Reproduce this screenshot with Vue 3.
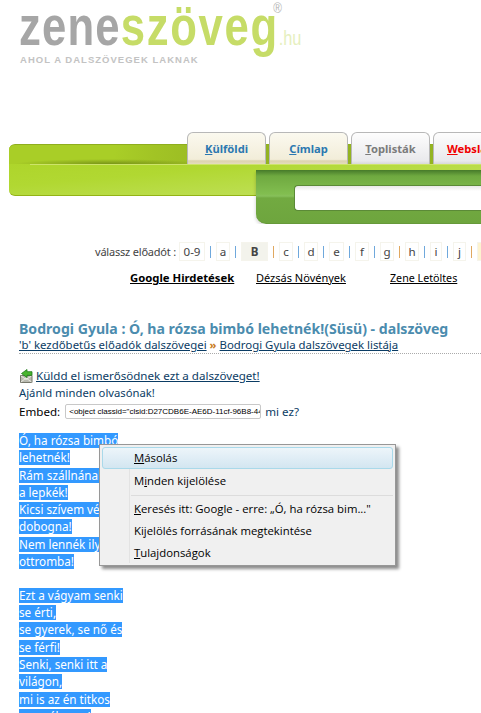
<script setup>
const letters = [
  { t: '0-9', w: 26 }, { t: 'a', w: 14 }, { t: 'B', w: 27, active: true }, { t: 'c', w: 14 },
  { t: 'd', w: 14 }, { t: 'e', w: 15 }, { t: 'f', w: 14 }, { t: 'g', w: 14 },
  { t: 'h', w: 14 }, { t: 'i', w: 12 }, { t: 'j', w: 13 }, { t: '', w: 12, last: true },
]
const orangeSeps = [2, 7, 10]
const lyrics = [
  ['Ó, ha rózsa bimbó', 'lehetnék!', 'Rám szállnának', 'a lepkék!', 'Kicsi szívem vél', 'dobogna!', 'Nem lennék ily', 'ottromba!'],
  ['Ezt a vágyam senki', 'se érti,', 'se gyerek, se nő és', 'se férfi!', 'Senki, senki itt a', 'világon,', 'mi is az én titkos', 'nagy álmom!'],
]
</script>

<template>
  <div class="page">
    <header class="logo">
      <div class="brand"><span class="zene">zene</span><span class="szoveg">szöveg</span><span class="hu">.hu</span><span class="reg">®</span></div>
      <div class="slogan">AHOL A DALSZÖVEGEK LAKNAK</div>
    </header>

    <section class="hero">
      <nav class="tabs">
        <a class="tab cream"><u>K</u>ülföldi</a>
        <a class="tab cream"><u>C</u>ímlap</a>
        <a class="tab grey"><u>T</u>oplisták</a>
        <a class="tab red"><u>W</u>ebslágerek</a>
      </nav>
      <div class="bar"></div>
      <div class="panel"><div class="search"></div></div>
    </section>

    <div class="abc">
      <span class="abc-label">válassz előadót :</span>
      <template v-for="(l, i) in letters" :key="i">
        <span class="box" :class="{ active: l.active, last: l.last }" :style="{ width: l.w + 'px' }">{{ l.t }}</span>
        <span v-if="!l.last" class="sep" :class="orangeSeps.includes(i) ? 'orange' : 'blue'"></span>
      </template>
    </div>

    <div class="ads">
      <a class="ad-title">Google Hirdetések</a>
      <a class="ad-one">Dézsás Növények</a>
      <a class="ad-two">Zene Letöltes</a>
    </div>

    <main class="content">
      <h1>Bodrogi Gyula : Ó, ha rózsa bimbó lehetnék!(Süsü) - dalszöveg</h1>
      <div class="crumbs"><a>'b' kezdőbetűs előadók dalszövegei</a> <b>»</b> <a>Bodrogi Gyula dalszövegek listája</a></div>

      <div class="send">
        <svg class="mail" viewBox="0 0 14 14" width="14" height="14">
          <path d="M1.5 6.5h11.500v7H1.500z" fill="#b9bab0" stroke="#77786c" />
          <path d="M2 13l5-4 5.500 4M2 7l5 3.500L12.500 7" fill="none" stroke="#eeeee6" stroke-width=".9" />
          <path d="M8 .5 2.500 4.500 8 8.500V6.300h5V2.700H8z" fill="#49b52f" stroke="#1f7a1a" stroke-width=".8" />
        </svg>
        <a>Küldd el ismerősödnek ezt a dalszöveget!</a>
      </div>
      <div class="recommend">Ajánld minden olvasónak!</div>
      <div class="embed">
        <span>Embed:</span>
        <div class="embed-box">&lt;object classid="clsid:D27CDB6E-AE6D-11cf-96B8-444553540000"</div>
        <a class="what">mi ez?</a>
      </div>

      <div class="lyrics">
        <p v-for="(stanza, s) in lyrics" :key="s">
          <template v-for="line in stanza" :key="line"><span>{{ line }}</span><br /></template>
        </p>
      </div>
    </main>

    <div class="menu">
      <div class="item hot"><u>M</u>ásolás</div>
      <div class="item">M<u>i</u>nden kijelölése</div>
      <div class="rule"></div>
      <div class="item"><u>K</u>eresés itt: Google - erre: „Ó, ha rózsa bim..."</div>
      <div class="item">Ki<u>j</u>elölés forrásának megtekintése</div>
      <div class="item"><u>T</u>ulajdonságok</div>
    </div>
  </div>
</template>

<style>
html, body { margin: 0; background: #fff; overflow: hidden; }
</style>

<style scoped>
.page {
  position: relative;
  width: 481px;
  height: 713px;
  overflow: hidden;
  background: #fff;
  font-family: "Noto Sans", sans-serif;
  font-size: 11.6px;
  color: #0b3c64;
}
.logo { height: 132px; padding-left: 19px; box-sizing: border-box; }
.brand {
  height: 54px;
  width: 400px;
  font-family: "Liberation Sans", sans-serif;
  font-weight: 700;
  font-size: 56px;
  line-height: 52px;
  letter-spacing: 1.5px;
  white-space: nowrap;
  transform: scaleX(.78);
  transform-origin: left top;
  position: relative;
}
.zene { color: #a6a6a6; }
.szoveg { color: #c6dc67; letter-spacing: 2.1px; }
.hu { color: #e6efbe; font-size: 21px; font-weight: 400; letter-spacing: 0; }
.reg { position: absolute; left: 326px; top: -18px; font-size: 15px; font-weight: 400; letter-spacing: 0; color: #b5b5b5; }
.slogan {
  font-family: "Liberation Sans", sans-serif;
  font-size: 9.5px;
  font-weight: 700;
  letter-spacing: 1.02px;
  color: #c3c3c3;
  line-height: 12px;
  margin-left: 1px;
  white-space: nowrap;
}

.hero { height: 92px; width: 481px; overflow: hidden; }
.tabs { display: flex; gap: 3px; padding-left: 187px; height: 31px; position: relative; z-index: 1; width: 400px; }
.tab {
  flex: none;
  width: 77px;
  height: 31px;
  border: 1px solid #b8b8b8;
  border-bottom: 0;
  border-radius: 6px 6px 0 0;
  font-weight: 700;
  font-size: 11.2px;
  text-align: center;
  line-height: 32px;
  box-sizing: content-box;
  white-space: nowrap;
}
.cream { background: linear-gradient(#fbf9ef, #f2edd9 85%, #dcd3ae 90%, #e4dcbd); color: #2c78b0; }
.grey { background: linear-gradient(#fdfdfd, #e9e9ec 90%, #d8d8d8); color: #7b7b7b; }
.red {
  background: linear-gradient(#fdfdfd, #e9e9ec 90%, #d8d8d8);
  color: #f00000;
  width: 90px;
  padding-left: 13px;
  text-align: left;
}
.bar {
  margin: -19px 0 0 9px;
  height: 52px;
  width: 480px;
  border-radius: 6px 0 0 6px;
  box-sizing: border-box;
  border-top: 1px solid #8fae1e;
  border-bottom: 1px solid #93b316;
  background:
    linear-gradient(#cde46a, #cde46a) 21px 19px / 100% 1px no-repeat,
    radial-gradient(ellipse 95px 5px at 100px 19px, rgba(80, 100, 10, .55), transparent) 0 0 / 100% 19px no-repeat,
    linear-gradient(97deg, #a9ce27 22%, #a2c425 30%, #93b322 50%, #94b421) 0 0 / 100% 19px no-repeat,
    linear-gradient(175deg, #aed52b 20%, #b1d832 45%, #bcde50 75%, #bedf57);
}
.panel {
  margin: -26px 0 0 256px;
  height: 54px;
  width: 240px;
  box-sizing: border-box;
  padding: 15px 0 0 38px;
  border-radius: 0 0 0 10px;
  position: relative;
  border-bottom: 1px solid #66993a;
  background: linear-gradient(#467a2a, #6fa940 6px, #82be50 24px, #87c05b 26px, #72aa41 28px, #6ea53e);
  box-shadow: -1px 2px 3px rgba(0, 0, 0, .12);
}
.search {
  height: 26px;
  box-sizing: border-box;
  background: linear-gradient(#e8e8e8, #fff 5px);
  border: 1px solid #5b8a37;
  border-right: 0;
  border-radius: 4px 0 0 4px;
}

.abc {
  display: flex;
  align-items: center;
  margin-top: 18px;
  height: 19px;
  padding-left: 95px;
  color: #444;
  font-size: 11px;
  white-space: nowrap;
}
.abc-label { margin-right: 4px; width: 80px; flex: none; letter-spacing: -.2px; }
.box {
  flex: none;
  height: 19px;
  line-height: 18px;
  box-sizing: border-box;
  text-align: center;
  border: 1px solid #f5f4ec;
  font-size: 11.6px;
}
.box.active { background: #f3f3ec; font-weight: 700; }
.box.last { background: #fdf3cf; }
.sep { flex: none; width: 1.5px; height: 12px; margin: 0 4.75px; }
.blue { background: #6fa8dc; }
.orange { background: #e0a860; }

.ads { display: flex; align-items: baseline; height: 18px; margin-top: 8px; padding-left: 130px; color: #000; line-height: 18px; }
.ads a { text-decoration: underline; white-space: nowrap; }
.ad-title { font-weight: 700; width: 126px; font-size: 11.3px; }
.ad-one { font-size: 11px; width: 134px; }
.ad-two { font-size: 10.7px; }

.content { margin-top: 34px; padding-left: 19px; }
h1 {
  margin: 0;
  font-size: 14.1px;
  font-weight: 700;
  line-height: 16px;
  color: #4b8cae;
  white-space: nowrap;
}
.crumbs {
  line-height: 15px;
  height: 16px;
  font-size: 11.4px;
  border-bottom: 1px dotted #aaa;
  white-space: nowrap;
}
.crumbs a, .send a { text-decoration: underline; }
.crumbs b { color: #c77a1a; }
.send { display: flex; align-items: center; gap: 3px; margin-top: 13px; height: 17px; }
.mail { flex: none; }
.recommend { height: 18px; line-height: 18px; font-size: 11.25px; }
.embed { display: flex; align-items: center; height: 18px; color: #000; }
.embed-box {
  width: 196px;
  height: 15px;
  margin-left: 5px;
  box-sizing: border-box;
  overflow: hidden;
  white-space: nowrap;
  border: 1px solid #c8c8c8;
  border-radius: 2px;
  font-size: 8px;
  line-height: 13px;
  padding-left: 3px;
  font-family: "Liberation Sans", sans-serif;
}
.what { margin-left: 4px; color: #0b3c64; }
.lyrics { margin-top: 12px; line-height: 17.3px; color: #fff; font-size: 11.7px; }
.lyrics p { margin: 0 0 16.5px; }
.lyrics span { display: inline-block; background: #3399ff; height: 15px; line-height: 15px; vertical-align: top; margin-top: 1px; }

.menu {
  position: absolute;
  left: 99px;
  top: 444px;
  width: 297px;
  height: 122px;
  box-sizing: border-box;
  padding: 2px;
  background:
    linear-gradient(#e3e3e3, #e3e3e3) 29px 2px / 1px 116px no-repeat,
    #f0f0f0;
  border: 1px solid #979797;
  box-shadow: 3px 3px 3px rgba(0, 0, 0, .45);
  color: #000;
  font-family: "Open Sans", sans-serif;
  font-size: 11.35px;
}
.item { height: 22px; line-height: 22px; padding-left: 32px; white-space: nowrap; }
.hot {
  border: 1px solid #a9d9ea;
  border-radius: 3px;
  box-sizing: border-box;
  line-height: 20px;
  padding-left: 31px;
  margin-bottom: 1px;
  background: linear-gradient(#edf5fa, #d3e6f1);
}
.rule { height: 1px; background: #dcdcdc; margin: 3px 0 2px 29px; }
</style>
